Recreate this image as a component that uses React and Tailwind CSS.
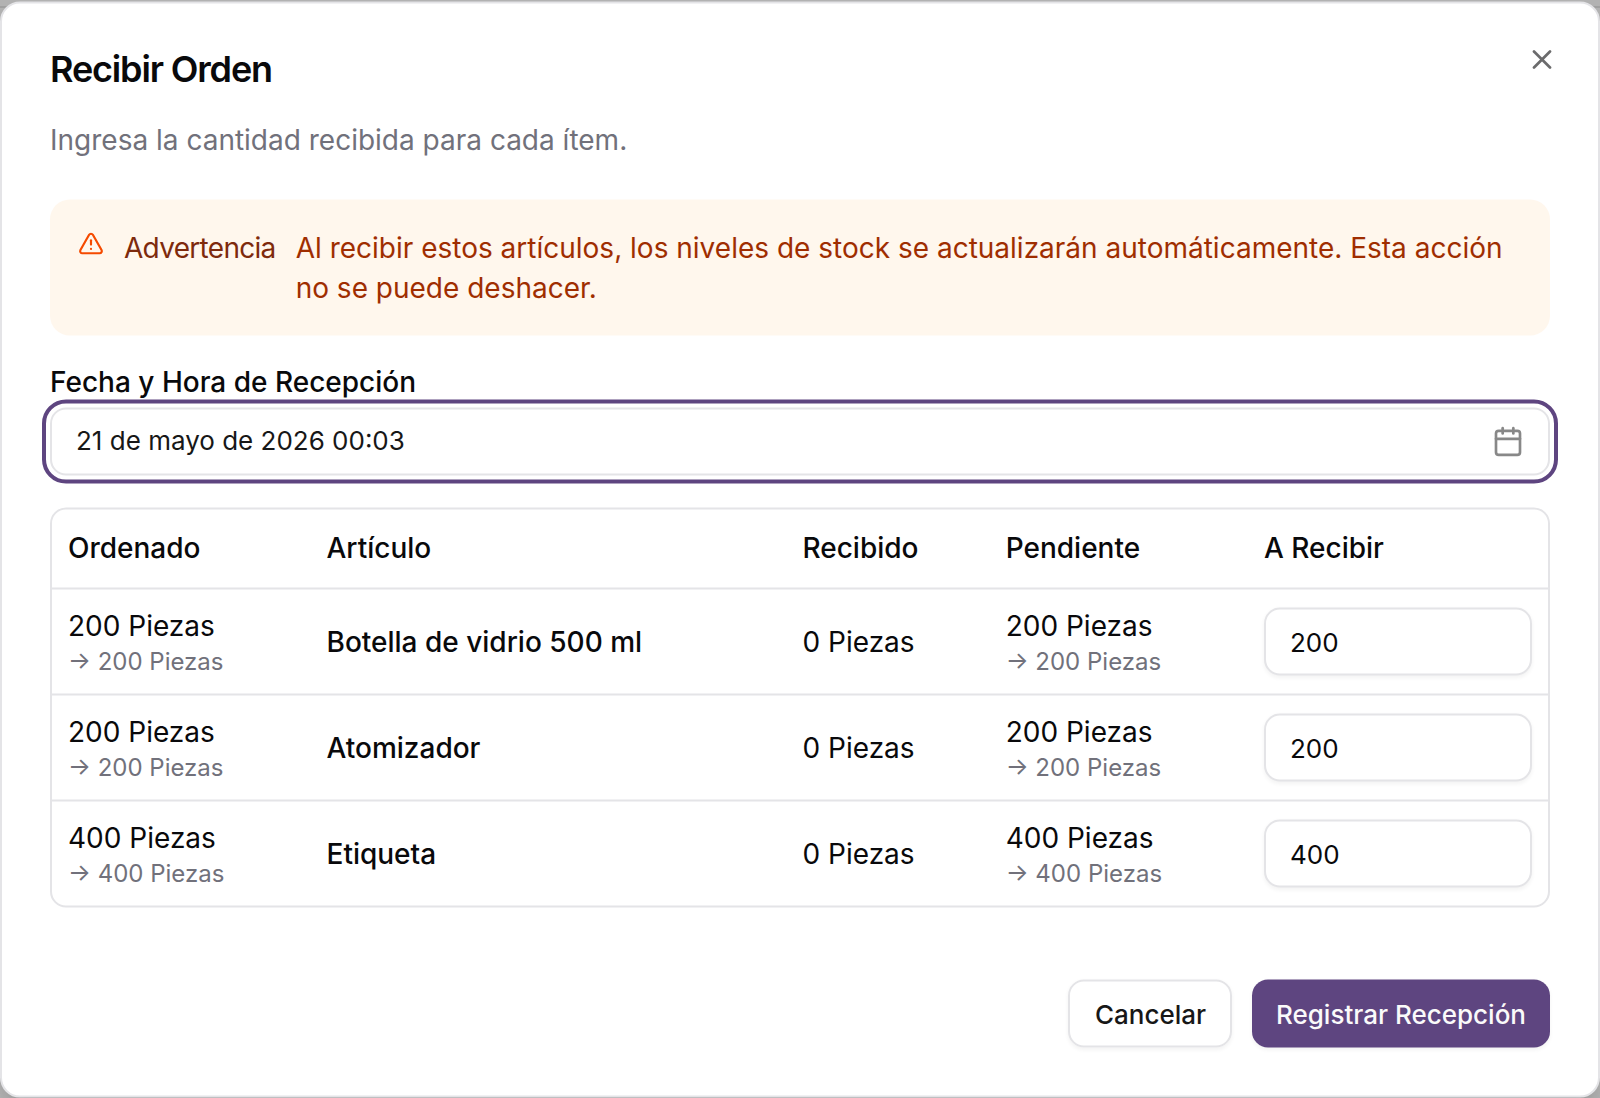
import React from 'react';
import { Calendar, TriangleAlert, X } from 'lucide-react';

const items = [
  { id: 1, name: 'Botella de vidrio 500 ml', ordered: 200, received: 0, pending: 200 },
  { id: 2, name: 'Atomizador', ordered: 200, received: 0, pending: 200 },
  { id: 3, name: 'Etiqueta', ordered: 400, received: 0, pending: 400 },
];

const columns = 'grid grid-cols-[258.5px_476px_203.2px_258.3px_300px] items-center';

function Quantity({ value }) {
  return (
    <div>
      <div className="leading-10">{value} Piezas</div>
      <div className="text-2xl leading-8 text-zinc-500">→ {value} Piezas</div>
    </div>
  );
}

function ItemRow({ item }) {
  return (
    <div className={`${columns} h-[106px] border-b-2 border-zinc-200 last:h-[104px] last:border-b-0`}>
      <div className="px-4"><Quantity value={item.ordered} /></div>
      <div className="px-4 font-medium">{item.name}</div>
      <div className="px-4">{item.received} Piezas</div>
      <div className="px-4"><Quantity value={item.pending} /></div>
      <div className="px-4">
        <input
          defaultValue={item.pending}
          className="block h-[68px] w-full rounded-[16px] border-2 border-zinc-200 bg-white px-6 text-[26px] shadow-[0_2px_4px_rgba(0,0,0,0.05)] outline-none"
        />
      </div>
    </div>
  );
}

export default function App() {
  return (
    <div className="relative flex h-[1098px] w-[1600px] items-center overflow-hidden bg-[#b2b2b2] font-['Inter',sans-serif] text-[28px] text-zinc-950">
      {/* Borde de la página que queda detrás del diálogo */}
      <div className="absolute inset-x-0 top-0 h-2 border-b-2 border-[#a0a0a0]" />

      <div className="relative h-[1096px] w-full translate-y-[0.5px] rounded-[20px] border-2 border-zinc-200 bg-white p-12 shadow-[0_20px_30px_-6px_rgba(0,0,0,0.1),0_8px_12px_-8px_rgba(0,0,0,0.1)]">
        <button className="absolute top-10 right-10 opacity-60">
          <X size={32} />
        </button>

        <h2 className="-mt-px text-[36px] leading-none font-semibold tracking-[-0.032em]">Recibir Orden</h2>
        <p className="mt-[33px] leading-10 text-zinc-500">Ingresa la cantidad recibida para cada ítem.</p>

        {/* Aviso */}
        <div className="mt-10 flex gap-5 rounded-[20px] bg-orange-50 p-7 leading-10">
          <TriangleAlert size={26} className="mt-[3px] shrink-0 text-orange-600" />
          <div className="tracking-tight text-orange-900">Advertencia</div>
          <div className="text-orange-800">
            Al recibir estos artículos, los niveles de stock se actualizarán automáticamente. Esta acción no se puede deshacer.
          </div>
        </div>

        {/* Fecha */}
        <label className="mt-8 block leading-none font-medium">Fecha y Hora de Recepción</label>
        <div className="mt-3 flex h-[68px] items-center justify-between rounded-[16px] border-2 border-zinc-200 px-6 text-[26px] text-neutral-900 outline-4 outline-offset-4 outline-[#5e4580]">
          <span className="pb-[3px]">21 de mayo de 2026 00:03</span>
          <Calendar size={32} className="text-[#888888]" />
        </div>

        {/* Tabla de artículos */}
        <div className="mt-8 rounded-[16px] border-2 border-zinc-200">
          <div className={`${columns} h-20 border-b-2 border-zinc-200 pb-0.5 font-medium`}>
            <div className="px-4">Ordenado</div>
            <div className="px-4">Artículo</div>
            <div className="px-4">Recibido</div>
            <div className="px-4">Pendiente</div>
            <div className="px-4">A Recibir</div>
          </div>
          <div>
            {items.map((item) => (
              <ItemRow key={item.id} item={item} />
            ))}
          </div>
        </div>

        <div className="mt-[72px] flex justify-end gap-5 text-[26px] font-medium">
          <button className="h-[68px] w-[164px] rounded-[16px] border-2 border-zinc-200 pl-px text-neutral-900 shadow-[0_2px_4px_rgba(0,0,0,0.05)]">
            Cancelar
          </button>
          <button className="h-[68px] w-[298px] rounded-[16px] bg-[#5e4580] text-neutral-50 shadow-[0_2px_4px_rgba(0,0,0,0.05)]">
            Registrar Recepción
          </button>
        </div>
      </div>
    </div>
  );
}
